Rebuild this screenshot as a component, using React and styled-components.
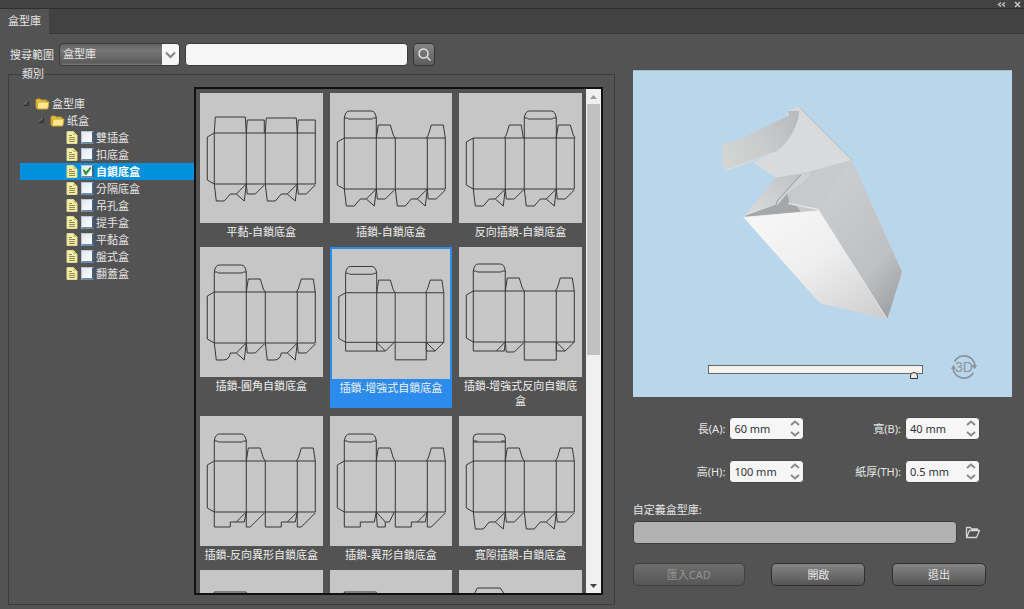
import React, { useState } from "react";
import styled, { createGlobalStyle } from "styled-components";

const GlobalStyle = createGlobalStyle`
  * {
    box-sizing: border-box;
  }

  body {
    margin: 0;
    background: #535353;
  }

  body, button, input, select {
    font-family: "Noto Sans", "Noto Sans CJK TC", sans-serif;
    font-size: 11px;
    line-height: 15px;
    color: #e6e6e6;
  }
`;

const Window = styled.div`
  display: flex;
  flex-direction: column;
  height: 100vh;
  overflow: hidden;
`;

const TitleBar = styled.header`
  display: flex;
  justify-content: flex-end;
  align-items: center;
  gap: 8px;
  height: 9px;
  padding: 0 3px;
  background: #424242;
  border-bottom: 1px solid #2e2e2e;

  & > button {
    display: flex;
    padding: 0;
    border: none;
    background: none;
    color: #c8c8c8;
  }
`;

const TabBar = styled.nav`
  display: flex;
  height: 25px;
  background: #424242;
  border-bottom: 1px solid #3a3a3a;
`;

const Tab = styled.button`
  height: 25px;
  padding: 0 8px 2px;
  border: none;
  background: #535353;
`;

const Main = styled.main`
  flex: 1;
  min-height: 0;
  display: grid;
  grid-template-columns: minmax(0, 8fr) minmax(0, 5fr);
  gap: 18px;
  padding: 9px 12px 4px 8px;
`;

const Library = styled.section`
  display: flex;
  flex-direction: column;
  min-height: 0;
`;

const SearchRow = styled.div`
  display: flex;
  align-items: center;
  gap: 5px;
  height: 23px;
  padding-left: 2px;
`;

const SelectWrap = styled.div`
  position: relative;
  width: 121px;
  height: 23px;

  & > select {
    width: 100%;
    height: 100%;
    padding: 0 20px 2px 3px;
    appearance: none;
    border: 1px solid #3a3a3a;
    border-radius: 4px;
    background: linear-gradient(#616161, #777 30%, #5c5c5c 90%, #7c7c7c);
  }

  & > svg {
    position: absolute;
    top: 1px;
    right: 1px;
    width: 17px;
    height: 21px;
    background: #f6f6f6;
    border-radius: 0 3px 3px 0;
    pointer-events: none;
  }
`;

const SearchInput = styled.input`
  flex: 0 1 223px;
  min-width: 0;
  height: 23px;
  border: 1px solid #3a3a3a;
  border-radius: 4px;
  background: #f6f6f6;
  color: #333;
`;

const SearchButton = styled.button`
  display: flex;
  align-items: center;
  justify-content: center;
  width: 22px;
  height: 23px;
  padding: 0;
  border: 1px solid #363636;
  border-radius: 4px;
  background: linear-gradient(#868686, #5c5c5c);
`;

const Category = styled.fieldset`
  flex: 1;
  min-height: 0;
  min-width: 0;
  display: flex;
  margin: 1px 0 0;
  padding: 6px 11px 9px;
  border: 1px solid #3c3c3c;

  & > legend {
    margin-left: 1px;
    padding: 0 1px;
    line-height: 14px;
  }
`;

const Tree = styled.div`
  width: 174px;
  padding-top: 8px;
`;

const TreeRow = styled.label`
  display: flex;
  align-items: center;
  height: 17px;
  padding-left: ${(props) => props.$indent}px;
  background: ${(props) => (props.$active ? "#0090dc" : "transparent")};
  color: ${(props) => (props.$active ? "#fff" : "#e6e6e6")};
  font-weight: ${(props) => (props.$active ? "bold" : "normal")};

  & > span {
    padding: 0 0 1px 2px;
  }
`;

const CheckBox = styled.input`
  display: grid;
  place-items: center;
  appearance: none;
  width: 13px;
  height: 13px;
  margin: 0 0 0 3px;
  border: 1px solid #b9c4d2;
  border-right: 2px solid #3d638c;
  border-bottom: 2px solid #6f8bab;
  background: linear-gradient(135deg, #e2e6ee, #fff);

  &:checked::after {
    content: "";
    width: 9px;
    height: 8px;
    background: #2a9632;
    clip-path: polygon(0 35%, 25% 35%, 38% 60%, 85% 0, 100% 12%, 42% 100%, 30% 100%);
  }
`;

const Gallery = styled.div`
  flex: 1;
  min-width: 0;
  display: flex;
  border: 2px solid #111;
`;

const CardGrid = styled.div`
  flex: 1;
  min-width: 0;
  display: grid;
  grid-template-columns: repeat(3, minmax(0, 1fr));
  align-content: start;
  gap: 8px 7px;
  padding: 4px;
  overflow-y: auto;
  scrollbar-width: none;
`;

const Card = styled.button`
  display: flex;
  flex-direction: column;
  padding: ${(props) => (props.$active ? "2px" : "0")};
  border: none;
  background: ${(props) => (props.$active ? "#2b8cee" : "transparent")};
  color: #f0f0f0;

  & > svg {
    width: 100%;
    height: 130px;
    background: #c6c6c6;
  }

  & > span {
    width: 100%;
    min-height: 15px;
    margin-top: 1px;
    text-align: center;
  }
`;

const ScrollBar = styled.div`
  display: flex;
  flex-direction: column;
  width: 15px;
  background: #f0f0f0;

  & > button {
    display: flex;
    justify-content: center;
    align-items: center;
    height: 15px;
    padding: 0;
    border: none;
    background: none;
  }
`;

const ScrollTrack = styled.div`
  flex: 1;
  padding: 0 1px;

  & > div {
    height: 53%;
    background: #c1c1c1;
  }
`;

const Side = styled.section`
  display: flex;
  flex-direction: column;
  padding-top: 27px;
`;

const Preview = styled.div`
  display: flex;
  flex-direction: column;
  align-items: center;
  height: 327px;
  padding-top: 31px;
  background: #bad6ea;
  border-top: 1px solid #a3bac9;

  & > svg {
    width: 208px;
    height: 220px;
  }
`;

const ViewRow = styled.div`
  display: flex;
  align-items: center;
  gap: 28px;
  width: 100%;
  margin-top: 32px;
  padding: 0 35px 0 75px;

  & > button {
    display: flex;
    padding: 0;
    border: none;
    background: none;
  }
`;

const AngleSlider = styled.input`
  flex: 1;
  min-width: 0;
  height: 9px;
  margin: 4px 0 0;
  appearance: none;
  background: #f4f3ee;
  border: 1px solid #66696a;

  &::-webkit-slider-thumb {
    appearance: none;
    width: 8px;
    height: 7px;
    margin-top: 13px;
    border: 1px solid #333;
    border-radius: 4px 4px 0 0;
    background: #e9e9e9;
  }
`;

const Params = styled.div`
  display: grid;
  grid-template-columns: 1fr 1fr;
  gap: 20px 4px;
  padding: 20px 32px 0 0;
`;

const Param = styled.div`
  display: flex;
  align-items: center;
  justify-content: flex-end;
  gap: 4px;
`;

const Stepper = styled.div`
  display: flex;
  width: 75px;
  height: 23px;
  border: 1px solid #484848;
  border-radius: 4px;
  background: #f6f6f6;

  & > input {
    flex: 1;
    min-width: 0;
    padding: 0 0 1px 4px;
    border: none;
    background: none;
    color: #333;
  }

  & > div {
    display: flex;
    flex-direction: column;
    width: 16px;
  }

  & > div > button {
    flex: 1;
    display: flex;
    align-items: center;
    justify-content: center;
    padding: 0;
    border: none;
    background: none;
  }
`;

const PathLabel = styled.label`
  margin-top: 19px;
`;

const PathRow = styled.div`
  display: flex;
  align-items: center;
  gap: 8px;
  margin-top: 4px;
  padding-right: 31px;

  & > input {
    flex: 1;
    min-width: 0;
    height: 23px;
    border: 1px solid #3e3e3e;
    border-radius: 4px;
    background: #b1b1b1;
  }

  & > button {
    display: flex;
    padding: 0;
    border: none;
    background: none;
  }
`;

const Actions = styled.div`
  display: flex;
  justify-content: space-between;
  margin-top: 19px;
  padding-right: 26px;
`;

const ActionButton = styled.button`
  width: ${(props) => (props.$wide ? "112px" : "94px")};
  height: 23px;
  padding: 0 0 1px;
  border: 1px solid #303030;
  border-radius: 5px;
  background: linear-gradient(#858585, #565656);

  &:disabled {
    color: #939393;
    border-color: #414141;
    background: linear-gradient(#6e6e6e, #565656);
  }
`;

// panel edges of a carton blank, left to right
const EDGES = [14, 46, 65, 97, 115];
const BODY = 51;

const line = (x, y, points) =>
  "M" + points.map(([dx, dy]) => `${x + dx} ${y + dy}`).join("L");

const mirror = (width, points) => points.map(([dx, dy]) => [width - dx, dy]);

const DUST = [[0, 0], [2, -13], [14, -13], [17, -3], [19, 0]];

const TOPS = {
  lid: (x, y) => line(x, y, [[0, 0], [1, -16], [31, -16], [32, 0]]),
  lidLow: (x, y) => line(x, y, [[0, 0], [1, -15], [31, -15], [32, 0]]),
  ear: (x, y) => line(x, y, [[0, 0], [1, -13], [18, -13], [18, 0]]),
  tuck: (x, y) =>
    `M${x} ${y}v-20q1-7 5-7h22q4 0 5 7v20M${x} ${y - 20}h3l1 1h24l1-1h3`,
  tuckWide: (x, y) =>
    `M${x} ${y}v-23q0-4 4-4h24q4 0 4 4v23M${x} ${y - 19}h32M${x} ${y - 20}h4M${x + 28} ${y - 20}h4`,
  dust: (x, y) => line(x, y, DUST),
  dustBack: (x, y) => line(x, y, mirror(18, DUST)),
  cap: (x, y) => `M${x} ${y}v-24h32v24`,
  capSlant: (x, y) => line(x, y, [[0, 0], [1, -22], [4, -28], [27, -28], [31, -22], [32, 0]]),
  none: () => "",
};

const BOTTOMS = {
  lock: (x, y) =>
    line(x, y, [[0, 0], [2, 17], [10, 17], [16, 10], [22, 10], [32, 0], [30, 17], [22, 10]]),
  roundLock: (x, y) =>
    `M${x} ${y}l2 17h7q6 0 7-7h6l10-10l-2 17l-8-7`,
  side: (x, y) => line(x, y, [[0, 0], [1, 10], [9, 10], [18, 1]]),
  shallow: (x, y) => line(x, y, [[0, 0], [0, 9], [32, 9], [32, 0]]),
  shallowFold: (x, y) =>
    line(x, y, [[0, 0], [0, 9], [31, 9], [32, 0], [23, 9]]),
  deep: (x, y) => line(x, y, [[0, 0], [0, 18], [32, 18], [32, 0]]),
  fold: (x, y) => line(x, y, [[0, 0], [0, 9], [9, 9], [18, 0]]) + line(x, y, [[0, 0], [9, 9]]),
  step: (x, y) =>
    line(x, y, [[0, 0], [0, 15], [16, 15], [16, 10], [30, 10], [32, 0]]),
  stepFold: (x, y) =>
    line(x, y, [[0, 0], [0, 15], [16, 15], [16, 10], [30, 10], [32, 0], [22, 10]]),
  wedge: (x, y) => line(x, y, [[0, 0], [0, 15], [4, 15], [18, 1]]),
  notch: (x, y) =>
    line(x, y, [[0, 0], [1, 15], [9, 15], [9, 10], [13, 10], [18, 0]]) + line(x, y, [[0, 0], [9, 10]]),
};

const STANDARD = ["tuck", "dust", "none", "dustBack"];
const LOCKED = ["lock", "side", "lock", "side"];

const BOXES = [
  { name: "平黏-自鎖底盒", y: 40, top: ["lid", "ear", "lidLow", "ear"], bottom: LOCKED },
  { name: "插鎖-自鎖底盒", y: 45, top: STANDARD, bottom: LOCKED },
  { name: "反向插鎖-自鎖底盒", y: 45, top: ["none", "dustBack", "tuck", "dust"], bottom: LOCKED },
  { name: "插鎖-圓角自鎖底盒", y: 45, top: STANDARD, bottom: ["roundLock", "side", "roundLock", "side"] },
  { name: "插鎖-增強式自鎖底盒", y: 45, top: STANDARD, bottom: ["shallow", "fold", "deep", "fold"] },
  { name: "插鎖-增強式反向自鎖底盒", y: 44, top: STANDARD, bottom: ["shallowFold", "side", "deep", "fold"] },
  { name: "插鎖-反向異形自鎖底盒", y: 45, top: STANDARD, bottom: ["stepFold", "wedge", "stepFold", "wedge"] },
  { name: "插鎖-異形自鎖底盒", y: 45, top: STANDARD, bottom: ["step", "notch", "stepFold", "wedge"] },
  { name: "寬隙插鎖-自鎖底盒", y: 45, top: ["tuckWide", "dust", "none", "dustBack"], bottom: LOCKED },
  { name: "", y: 46, top: ["cap", "dust", "none", "dustBack"], bottom: LOCKED },
  { name: "", y: 46, top: ["cap", "dust", "none", "dustBack"], bottom: LOCKED },
  { name: "", y: 46, top: ["capSlant", "dust", "none", "dustBack"], bottom: LOCKED },
];

const KINDS = ["雙插盒", "扣底盒", "自鎖底盒", "分隔底盒", "吊孔盒", "提手盒", "平黏盒", "盤式盒", "翻蓋盒"];

const Dieline = ({ y, top, bottom }) => {
  const end = y + BODY;
  return (
    <svg
      viewBox="0 0 122 130"
      preserveAspectRatio="xMidYMin meet"
      fill="none"
      stroke="#363636"
      strokeWidth="1"
    >
      <path d={`M14 ${y}H115V${end}H14ZM46 ${y}V${end}M65 ${y}V${end}M97 ${y}V${end}`} />
      <path d={`M14 ${y}L7 ${y + 4}V${end - 4}L14 ${end}`} />
      {top.map((kind, i) => (
        <path key={"t" + i} d={TOPS[kind](EDGES[i], y)} />
      ))}
      {bottom.map((kind, i) => (
        <path key={"b" + i} d={BOTTOMS[kind](EDGES[i], end)} />
      ))}
    </svg>
  );
};

const Chevron = ({ up }) => (
  <svg width="10" height="6" viewBox="0 0 10 6" fill="none" stroke="#8a8a8a" strokeWidth="2">
    <path d={up ? "M1 5L5 1.5L9 5" : "M1 1L5 4.5L9 1"} />
  </svg>
);

const FolderIcon = () => (
  <svg width="15" height="13" viewBox="0 0 15 13">
    <path d="M1 11V3q0-1 1-1h3l1 1h5q1 0 1 1v7z" fill="#e8c53a" stroke="#b8922a" />
    <path d="M3 5h11l-1 6q0 1-1 1H2z" fill="#fbe98c" stroke="#cda632" />
  </svg>
);

const ArrowIcon = () => (
  <svg width="15" height="9" viewBox="0 0 15 9">
    <path d="M3.5 6.5L8.5 2V6.5Z" fill="#474747" stroke="#303030" />
    <path d="M3.5 6L8 2" stroke="#8a8a8a" strokeWidth="0.8" />
  </svg>
);

const DocIcon = () => (
  <svg width="12" height="13" viewBox="0 0 12 13">
    <path d="M1 .5h6.500l3.500 3.500v8.500H1z" fill="#f5f0ae" stroke="#e0d98f" />
    <path d="M7.500.5v3.500h3.500z" fill="#d0c060" />
    <path d="M3 4.500h3M3 6.500h6M3 8.500h6M3 10.500h6" stroke="#8f8a4c" />
  </svg>
);

const OpenFolderIcon = () => (
  <svg width="16" height="13" viewBox="0 0 16 13" fill="none" stroke="#d6d6d6" strokeWidth="1.300" strokeLinejoin="round">
    <path d="M12.500 4.500V3H6.500L5.500 1.500H1.500V11.500L4.500 4.500H14.500L11.500 11.500H1.500" />
  </svg>
);

const RotateIcon = () => (
  <svg width="26" height="26" viewBox="0 0 26 26" fill="none" stroke="#8b949b" strokeWidth="1.800">
    <path d="M3.500 7.500A11 11 0 0 1 24 12M22.500 18.500A11 11 0 0 1 2 14" />
    <path d="M21.500 11.500h4l-2 3zM.5 14.500h4l-2-3z" fill="#8b949b" strokeWidth="1" />
    <text x="13" y="18" textAnchor="middle" fontFamily="Liberation Sans" fontSize="14" fill="#8b949b" stroke="none">
      3D
    </text>
  </svg>
);

const CartonModel = () => (
  <svg viewBox="54 36 624 660">
    <defs>
      <linearGradient id="front" x1="0" y1="0" x2="0.9" y2="1">
        <stop offset="0.1" stopColor="#f6f6f6" />
        <stop offset="0.5" stopColor="#efefef" />
        <stop offset="1" stopColor="#cfcfcf" />
      </linearGradient>
      <linearGradient id="right" x1="0.2" y1="0" x2="0.8" y2="1">
        <stop offset="0" stopColor="#cdcecf" />
        <stop offset="0.7" stopColor="#bfc0c1" />
        <stop offset="1" stopColor="#a0a1a2" />
      </linearGradient>
      <linearGradient id="flap" x1="0" y1="0.6" x2="1" y2="0.2">
        <stop offset="0" stopColor="#d2d3d3" />
        <stop offset="0.5" stopColor="#c9cacb" />
        <stop offset="1" stopColor="#b9bbbd" />
      </linearGradient>
      <linearGradient id="dust" x1="0" y1="1" x2="1" y2="0">
        <stop offset="0" stopColor="#dcdddd" />
        <stop offset="1" stopColor="#bfc1c3" />
      </linearGradient>
    </defs>
    <path d="M265 62L296 51L455 210L340 242L230 263L160 219L225 186Z" fill="#d9dadb" />
    <path d="M66 162L88 153L92 160L268 76L262 64L298 62Q294 110 262 152Q245 174 226 187L78 241L66 222Z" fill="url(#flap)" />
    <path d="M66 222L78 241L226 187" fill="none" stroke="#e6e6e6" strokeWidth="2" />
    <path d="M298 52L455 210" stroke="#bcbebf" strokeWidth="3" />
    <path d="M228 263L303 252L455 210L357 362L130 382Z" fill="#c8c9ca" />
    <path d="M130 382L228 348L262 310L268 338L290 346L302 366Z" fill="#a4a6a8" />
    <path d="M228 263L303 252L232 332L228 346L130 382Z" fill="url(#dust)" />
    <path d="M303 252L332 248L316 272L262 310L232 346L228 340L232 332Z" fill="#d0d1d2" />
    <path d="M264 340L312 350L357 359" fill="none" stroke="#e8e8e8" strokeWidth="4" />
    <path d="M303 254L232 332L228 346L136 379" fill="none" stroke="#97999c" strokeWidth="3" />
    <path d="M455 210L606 545L562 688L357 362Z" fill="url(#right)" />
    <path d="M130 382L357 362L562 688L360 640Z" fill="url(#front)" />
    <path d="M130 382L357 362L562 688" fill="none" stroke="#f4f4f4" strokeWidth="2" />
  </svg>
);

const ParamField = ({ id, label, initial }) => {
  const [value, setValue] = useState(initial);
  const step = (amount) => {
    setValue(Math.round((parseFloat(value) + amount) * 10) / 10 + " mm");
  };

  return (
    <Param>
      <label htmlFor={id}>{label}</label>
      <Stepper>
        <input id={id} type="text" value={value} onChange={(e) => setValue(e.target.value)} />
        <div>
          <button type="button" aria-label="increase" onClick={() => step(1)}>
            <Chevron up />
          </button>
          <button type="button" aria-label="decrease" onClick={() => step(-1)}>
            <Chevron />
          </button>
        </div>
      </Stepper>
    </Param>
  );
};

const App = () => {
  const [kind, setKind] = useState(2);
  const [selected, setSelected] = useState(4);

  return (
    <Window>
      <GlobalStyle />
      <TitleBar>
        <button type="button" aria-label="collapse">
          <svg width="9" height="7" viewBox="0 0 9 7" fill="none" stroke="currentColor" strokeWidth="1.400">
            <path d="M4 1.500L1.500 3.500L4 5.500M8 1.500L5.500 3.500L8 5.500" />
          </svg>
        </button>
        <button type="button" aria-label="close">
          <svg width="7" height="7" viewBox="0 0 7 7" stroke="currentColor" strokeWidth="1.500">
            <path d="M1 1L6 6M6 1L1 6" />
          </svg>
        </button>
      </TitleBar>
      <TabBar>
        <Tab type="button">盒型庫</Tab>
      </TabBar>

      <Main>
        <Library>
          <SearchRow>
            <label htmlFor="scope">搜尋範圍</label>
            <SelectWrap>
              <select id="scope">
                <option>盒型庫</option>
              </select>
              <svg viewBox="0 0 17 21" fill="none" stroke="#858585" strokeWidth="2">
                <path d="M4 8.500L8.500 13L13 8.500" />
              </svg>
            </SelectWrap>
            <SearchInput type="text" aria-label="search" />
            <SearchButton type="button" aria-label="search">
              <svg width="13" height="13" viewBox="0 0 13 13" fill="none" stroke="#e2e2e2" strokeWidth="1.500">
                <circle cx="5.500" cy="5.500" r="4.500" />
                <path d="M9 9L12.500 12.500" />
              </svg>
            </SearchButton>
          </SearchRow>

          <Category>
            <legend>類別</legend>
            <Tree>
              <TreeRow as="div" $indent={0}>
                <ArrowIcon />
                <FolderIcon />
                <span>盒型庫</span>
              </TreeRow>
              <TreeRow as="div" $indent={15}>
                <ArrowIcon />
                <FolderIcon />
                <span>纸盒</span>
              </TreeRow>
              {KINDS.map((name, i) => (
                <TreeRow key={name} $indent={46} $active={i === kind}>
                  <DocIcon />
                  <CheckBox type="checkbox" checked={i === kind} onChange={() => setKind(i)} />
                  <span>{name}</span>
                </TreeRow>
              ))}
            </Tree>

            <Gallery>
              <CardGrid>
                {BOXES.map((box, i) => (
                  <Card key={i} type="button" $active={i === selected} onClick={() => setSelected(i)}>
                    <Dieline y={box.y} top={box.top} bottom={box.bottom} />
                    <span>{box.name}</span>
                  </Card>
                ))}
              </CardGrid>
              <ScrollBar>
                <button type="button" aria-label="scroll up">
                  <svg width="7" height="4" viewBox="0 0 7 4" fill="#9a9a9a">
                    <path d="M0 4L3.500 0L7 4Z" />
                  </svg>
                </button>
                <ScrollTrack>
                  <div />
                </ScrollTrack>
                <button type="button" aria-label="scroll down">
                  <svg width="7" height="4" viewBox="0 0 7 4" fill="#444">
                    <path d="M0 0L3.500 4L7 0Z" />
                  </svg>
                </button>
              </ScrollBar>
            </Gallery>
          </Category>
        </Library>

        <Side>
          <Preview>
            <CartonModel />
            <ViewRow>
              <AngleSlider type="range" defaultValue="98" aria-label="angle" />
              <button type="button" aria-label="rotate">
                <RotateIcon />
              </button>
            </ViewRow>
          </Preview>

          <Params>
            <ParamField id="length" label="長(A):" initial="60 mm" />
            <ParamField id="width" label="寬(B):" initial="40 mm" />
            <ParamField id="height" label="高(H):" initial="100 mm" />
            <ParamField id="thickness" label="紙厚(TH):" initial="0.5 mm" />
          </Params>

          <PathLabel htmlFor="custom">自定義盒型庫:</PathLabel>
          <PathRow>
            <input id="custom" type="text" />
            <button type="button" aria-label="browse">
              <OpenFolderIcon />
            </button>
          </PathRow>

          <Actions>
            <ActionButton type="button" $wide disabled>
              匯入CAD
            </ActionButton>
            <ActionButton type="button">開啟</ActionButton>
            <ActionButton type="button">退出</ActionButton>
          </Actions>
        </Side>
      </Main>
    </Window>
  );
};

export default App;
